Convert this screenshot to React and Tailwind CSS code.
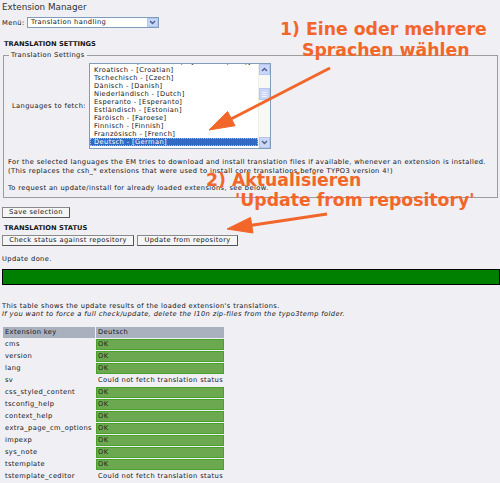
import React from 'react'

const languages = [
  'Chinesisch (Traditionell) - [Chinese (Trad)]',
  'Kroatisch - [Croatian]',
  'Tschechisch - [Czech]',
  'Dänisch - [Danish]',
  'Niederländisch - [Dutch]',
  'Esperanto - [Esperanto]',
  'Estländisch - [Estonian]',
  'Färöisch - [Faroese]',
  'Finnisch - [Finnish]',
  'Französisch - [French]',
  'Deutsch - [German]',
]

const rows = [
  ['cms', true],
  ['version', true],
  ['lang', true],
  ['sv', false],
  ['css_styled_content', true],
  ['tsconfig_help', true],
  ['context_help', true],
  ['extra_page_cm_options', true],
  ['impexp', true],
  ['sys_note', true],
  ['tstemplate', true],
  ['tstemplate_ceditor', false],
]

const Chevron = ({ up = false }) => (
  <svg width="7" height="5" viewBox="0 0 7 5" className="block">
    <path
      d={up ? 'M1 4 L3.5 1.5 L6 4' : 'M1 1 L3.5 3.5 L6 1'}
      fill="none"
      stroke="#4d6185"
      strokeWidth="1.4"
    />
  </svg>
)

const Button = ({ w, children }) => (
  <div
    className={`${w} h-[11px] flex items-center justify-center leading-[9px] bg-[#f5f5f5] border border-[#8a8a8a] border-r-[#555] border-b-[#555] whitespace-nowrap`}
  >
    {children}
  </div>
)

export default function App() {
  return (
    <div className="relative w-[500px] h-[483px] overflow-hidden bg-[#efeff4] text-[#151515] font-['DejaVu_Sans',Verdana,sans-serif] text-[6.7px] leading-[8px] tracking-[0.38px]">
      <div className="pl-[2px] h-[14px] text-[8.8px] leading-[14px] tracking-normal text-[#333]">Extension Manager</div>

      {/* menu */}
      <div className="mt-[3px] flex items-center h-[11px] pl-[2px]">
        <span className="w-[25px]">Menü:</span>
        <div className="w-[132px] h-[11px] bg-white border border-[#7f9db9] flex items-center justify-between">
          <span className="pl-[3px] leading-[9px] whitespace-nowrap">Translation handling</span>
          <span className="w-[11px] h-[9px] bg-[#c6d6fb] border border-[#b3c6f3] flex items-center justify-center">
            <Chevron />
          </span>
        </div>
      </div>

      <div className="mt-[12px] pl-[4px] h-[8px] font-bold tracking-normal">TRANSLATION SETTINGS</div>

      {/* settings fieldset */}
      <fieldset className="mt-[3px] ml-[3px] mr-0 mb-0 w-[495px] border border-[#9c9c9c] px-0 pt-0 pb-[4px]">
        <legend className="ml-[5px] px-[2px] leading-[8px]">Translation Settings</legend>
        <div className="flex items-center pl-[8px] pt-[4px]">
          <span className="w-[77px] whitespace-nowrap">Languages to fetch:</span>
          <div className="w-[182px] h-[86px] bg-white border border-[#7f9db9] flex overflow-hidden">
            <div className="flex-1 overflow-hidden">
              <div className="-mt-[6px]">
                {languages.map((l) => {
                  const sel = l.startsWith('Deutsch')
                  return (
                    <div
                      key={l}
                      className={
                        sel
                          ? 'h-[8px] leading-[6px] pl-[3px] whitespace-nowrap bg-[#316ac5] text-white border border-dotted border-[#9dbbee]'
                          : 'h-[8px] leading-[8px] pl-[4px] whitespace-nowrap'
                      }
                    >
                      {l}
                    </div>
                  )
                })}
              </div>
            </div>
            <div className="w-[12px] flex flex-col bg-[#f8f8f4] border-l border-[#eeeee8]">
              <div className="h-[11px] bg-[#c9d7fa] border border-[#b6c8f2] flex items-center justify-center">
                <Chevron up />
              </div>
              <div className="h-[13px]" />
              <div className="h-[12px] bg-[#c9d7fa] border border-[#b6c8f2] flex flex-col items-center justify-center gap-[1px]">
                <div className="w-[5px] h-px bg-[#eef2fd]" />
                <div className="w-[5px] h-px bg-[#eef2fd]" />
                <div className="w-[5px] h-px bg-[#eef2fd]" />
              </div>
              <div className="flex-1" />
              <div className="h-[11px] bg-[#c9d7fa] border border-[#b6c8f2] flex items-center justify-center">
                <Chevron />
              </div>
            </div>
          </div>
        </div>
        <div className="mt-[9px] pl-[4px] leading-[8.7px] whitespace-nowrap">
          For the selected languages the EM tries to download and install translation files if available, whenever an extension is installed.
          <br />
          (This replaces the csh_* extensions that were used to install core translations before TYPO3 version 4!)
          <div className="mt-[8.7px]">To request an update/install for already loaded extensions, see below.</div>
        </div>
      </fieldset>

      <div className="mt-[9px] ml-[2px]">
        <Button w="w-[68px]">Save selection</Button>
      </div>

      <div className="mt-[6px] pl-[4px] h-[8px] font-bold tracking-normal">TRANSLATION STATUS</div>

      <div className="mt-[3px] ml-[2px] flex gap-[3px]">
        <Button w="w-[132px]">Check status against repository</Button>
        <Button w="w-[101px]">Update from repository</Button>
      </div>

      <div className="mt-[9px] pl-[2px] h-[8px]">Update done.</div>

      <div className="mt-[6px] ml-[2px] w-[498px] h-[16px] border border-black bg-[#008000]" />

      <div className="mt-[17px] pl-[2px] whitespace-nowrap">
        <div>This table shows the update results of the loaded extension's translations.</div>
        <div className="italic">
          If you want to force a full check/update, delete the l10n zip-files from the typo3temp folder.
        </div>
      </div>

      {/* results table */}
      <div className="mt-[9px] ml-[3px] grid grid-cols-[92px_128px] gap-[1px] leading-[11px]">
        <div className="h-[11px] pl-[2px] bg-[#a9b1bf]">Extension key</div>
        <div className="h-[11px] pl-[2px] bg-[#a9b1bf]">Deutsch</div>
        {rows.map(([key, ok]) => (
          <React.Fragment key={key}>
            <div className="h-[11px] pl-[2px] whitespace-nowrap">{key}</div>
            {ok ? (
              <div className="h-[11px] pl-[1px] leading-[9px] bg-[#6ba84f] border border-[#47a12b] text-[#1d2b14]">OK</div>
            ) : (
              <div className="h-[11px] pl-[2px] whitespace-nowrap">Could not fetch translation status</div>
            )}
          </React.Fragment>
        ))}
      </div>

      {/* annotations */}
      <svg className="absolute inset-0 pointer-events-none" width="500" height="483" viewBox="0 0 500 483">
        <g fill="#f2662a" stroke="#f2662a">
          <line x1="330" y1="68" x2="231" y2="119" strokeWidth="3" />
          <polygon points="209,130 235,125.7 227.6,111.5" strokeWidth="1" />
          <line x1="327" y1="214" x2="250" y2="225.5" strokeWidth="3" />
          <polygon points="227,229 253,233 250.5,217.4" strokeWidth="1" />
        </g>
      </svg>
      <div className="absolute inset-0 pointer-events-none font-['DejaVu_Sans',Verdana,sans-serif] font-bold text-[17.3px] leading-[21px] tracking-normal text-[#f2662a] whitespace-nowrap">
        <div className="absolute left-[280px] top-[19px]">1) Eine oder mehrere</div>
        <div className="absolute left-[302px] top-[40px]">Sprachen wählen</div>
        <div className="absolute left-[206px] top-[170px]">2) Aktualisieren</div>
        <div className="absolute left-[235px] top-[190px]">'Update from repository'</div>
      </div>
    </div>
  )
}
